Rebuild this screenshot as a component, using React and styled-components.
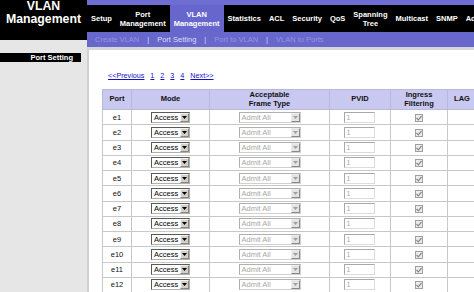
import React from 'react';
import styled, { createGlobalStyle } from 'styled-components';

const GlobalStyle = createGlobalStyle`
  html, body {
    margin: 0;
    padding: 0;
    background: #fff;
    overflow: hidden;
  }
  body {
    font-family: "Liberation Sans", Arial, sans-serif;
  }
`;

const navItems = [
  { label: 'Setup' },
  { label: 'Port\nManagement' },
  { label: 'VLAN\nManagement', active: true },
  { label: 'Statistics' },
  { label: 'ACL' },
  { label: 'Security' },
  { label: 'QoS' },
  { label: 'Spanning\nTree' },
  { label: 'Multicast' },
  { label: 'SNMP' },
  { label: 'Admin' },
];

const subLinks = [
  { label: 'Create VLAN' },
  { label: 'Port Setting', current: true },
  { label: 'Port to VLAN' },
  { label: 'VLAN to Ports' },
];

const ports = Array.from({ length: 12 }, (_, i) => `e${i + 1}`);

const ArrowIcon = ({ disabled }) => (
  <svg width="5" height="3" viewBox="0 0 5 3">
    <path d="M0 0 H5 L2.5 3 Z" fill={disabled ? '#a0a0a0' : '#000'} />
  </svg>
);

const CheckIcon = () => (
  <svg width="6" height="6" viewBox="0 0 6 6">
    <path d="M0.5 3 L2.3 4.8 L5.5 1" stroke="#8a8a8a" strokeWidth="1.2" fill="none" />
  </svg>
);

const App = () => {
  return (
    <>
      <GlobalStyle />
      <Page>
        {/* Left column: title + sidebar */}
        <LeftColumn>
          <Title>
            VLAN
            <br />
            Management
          </Title>
          <Sidebar>
            <SideTitle>Port Setting</SideTitle>
          </Sidebar>
        </LeftColumn>

        {/* Right column: navigation + content */}
        <RightColumn>
          <TopStrip />
          <NavBar>
            {navItems.map((item) => (
              <NavItem key={item.label} $active={item.active}>
                {item.label}
              </NavItem>
            ))}
          </NavBar>
          <SubNav>
            {subLinks.map((link, i) => (
              <React.Fragment key={link.label}>
                {i > 0 && <SubSep>|</SubSep>}
                <SubLink $current={link.current}>{link.label}</SubLink>
              </React.Fragment>
            ))}
          </SubNav>

          <Content>
            <Pager>
              <PageLink>&lt;&lt;Previous</PageLink>
              <PageLink>1</PageLink>
              <PageLink>2</PageLink>
              <PageLink>3</PageLink>
              <PageLink>4</PageLink>
              <PageLink>Next&gt;&gt;</PageLink>
            </Pager>

            <PortTable>
              <colgroup>
                <col style={{ width: 29 }} />
                <col style={{ width: 78 }} />
                <col style={{ width: 120 }} />
                <col style={{ width: 61 }} />
                <col style={{ width: 57 }} />
                <col style={{ width: 29 }} />
              </colgroup>
              <thead>
                <tr>
                  <Th>Port</Th>
                  <Th>Mode</Th>
                  <Th>
                    Acceptable
                    <br />
                    Frame Type
                  </Th>
                  <Th>PVID</Th>
                  <Th>
                    Ingress
                    <br />
                    Filtering
                  </Th>
                  <Th>LAG</Th>
                </tr>
              </thead>
              <tbody>
                {ports.map((port) => (
                  <Row key={port}>
                    <Td>{port}</Td>
                    <Td>
                      <Select $width={39}>
                        <SelectText>Access</SelectText>
                        <SelectButton>
                          <ArrowIcon />
                        </SelectButton>
                      </Select>
                    </Td>
                    <Td>
                      <Select $width={62} $disabled>
                        <SelectText $disabled>Admit All</SelectText>
                        <SelectButton $disabled>
                          <ArrowIcon disabled />
                        </SelectButton>
                      </Select>
                    </Td>
                    <Td>
                      <TextBox>1</TextBox>
                    </Td>
                    <Td>
                      <CheckBox>
                        <CheckIcon />
                      </CheckBox>
                    </Td>
                    <Td />
                  </Row>
                ))}
              </tbody>
            </PortTable>
          </Content>
        </RightColumn>
      </Page>
    </>
  );
};

export default App;

const Page = styled.div`
  display: flex;
  width: 474px;
  height: 292px;
  overflow: hidden;
  background: #fff;
`;

const LeftColumn = styled.div`
  display: flex;
  flex-direction: column;
  width: 87px;
  flex-shrink: 0;
`;

const Title = styled.div`
  height: 41px;
  margin-top: -1px;
  padding-top: 1px;
  box-sizing: border-box;
  background: #000;
  color: #fff;
  font-weight: bold;
  font-size: 12.3px;
  line-height: 13px;
  text-align: center;
`;

const Sidebar = styled.div`
  flex: 1;
  background: #e6e6e6;
  padding-top: 13px;
`;

const SideTitle = styled.div`
  width: 81px;
  height: 9px;
  background: #000;
  color: #fff;
  font-size: 7.5px;
  font-weight: bold;
  line-height: 9px;
  text-align: right;
  padding-right: 8px;
  box-sizing: border-box;
`;

const RightColumn = styled.div`
  flex: 1;
  display: flex;
  flex-direction: column;
  min-width: 0;
`;

const TopStrip = styled.div`
  height: 5px;
  background: #6e6ed2;
`;

const NavBar = styled.div`
  display: flex;
  height: 27px;
  background: #000;
  white-space: nowrap;
  overflow: hidden;
`;

const NavItem = styled.div`
  display: flex;
  align-items: center;
  justify-content: center;
  padding: 0 4px;
  white-space: pre-line;
  text-align: center;
  color: #fff;
  font-size: 7.5px;
  font-weight: bold;
  line-height: 9px;
  background: ${({ $active }) => ($active ? '#6666cc' : '#000')};
  flex-shrink: 0;
`;

const SubNav = styled.div`
  display: flex;
  align-items: center;
  height: 15px;
  background: #6868cc;
  padding-left: 8px;
  font-size: 7.5px;
  white-space: nowrap;
`;

const SubLink = styled.span`
  color: ${({ $current }) => ($current ? '#dcdcff' : '#9494e4')};
`;

const SubSep = styled.span`
  color: #d8d8ff;
  margin: 0 8px;
`;

const Content = styled.div`
  flex: 1;
  background: #fff;
  border-top: 3px solid #d6d6d6;
  border-left: 2px solid #d0d0d0;
  padding: 21px 0 0 13px;
  overflow: hidden;
`;

const Pager = styled.div`
  display: flex;
  gap: 6px;
  margin-left: 6px;
  height: 9px;
  margin-bottom: 9px;
  font-size: 7.2px;
  line-height: 9px;
`;

const PageLink = styled.span`
  color: #1010c0;
  text-decoration: underline;
`;

const PortTable = styled.table`
  border-collapse: collapse;
  table-layout: fixed;
  width: 374px;
  font-size: 7.5px;
  border: 1px solid #c4c4c4;
`;

const Th = styled.th`
  height: 19px;
  padding: 0;
  background: #c8c8f0;
  color: #111;
  font-weight: bold;
  line-height: 8.5px;
  border: 1px solid #b8b8d8;
  text-align: center;
`;

const Row = styled.tr`
  height: 15.25px;
`;

const Td = styled.td`
  padding: 0;
  border: 1px solid #c8c8c8;
  text-align: center;
  color: #111;
  vertical-align: middle;
`;

const Select = styled.span`
  display: inline-flex;
  align-items: center;
  justify-content: space-between;
  width: ${({ $width }) => $width}px;
  height: 11px;
  box-sizing: border-box;
  border: 1px solid ${({ $disabled }) => ($disabled ? '#b0b0b0' : '#5a5a5a')};
  border-right-color: ${({ $disabled }) => ($disabled ? '#d0d0d0' : '#b0b0b0')};
  border-bottom-color: ${({ $disabled }) => ($disabled ? '#d0d0d0' : '#b0b0b0')};
  background: #fff;
  vertical-align: middle;
  text-align: left;
`;

const SelectText = styled.span`
  padding-left: 2px;
  font-size: 7.5px;
  line-height: 9px;
  color: ${({ $disabled }) => ($disabled ? '#a8a8a8' : '#000')};
`;

const SelectButton = styled.span`
  display: flex;
  align-items: center;
  justify-content: center;
  width: 9px;
  height: 9px;
  background: ${({ $disabled }) => ($disabled ? '#e4e4e4' : '#d4d0c8')};
  box-sizing: border-box;
  border: 1px solid ${({ $disabled }) => ($disabled ? '#ececec' : '#f4f4f4')};
  border-right-color: #888;
  border-bottom-color: #888;
`;

const TextBox = styled.span`
  display: inline-block;
  width: 31px;
  height: 11px;
  box-sizing: border-box;
  border: 1px solid #a8a8a8;
  border-right-color: #dcdcdc;
  border-bottom-color: #dcdcdc;
  background: #fff;
  color: #a8a8a8;
  font-size: 7px;
  line-height: 9px;
  text-align: left;
  padding-left: 2px;
  vertical-align: middle;
  margin-left: -2px;
`;

const CheckBox = styled.span`
  display: inline-flex;
  align-items: center;
  justify-content: center;
  width: 8px;
  height: 8px;
  box-sizing: border-box;
  border: 1px solid #a0a0a0;
  background: #ececec;
  vertical-align: middle;
`;
